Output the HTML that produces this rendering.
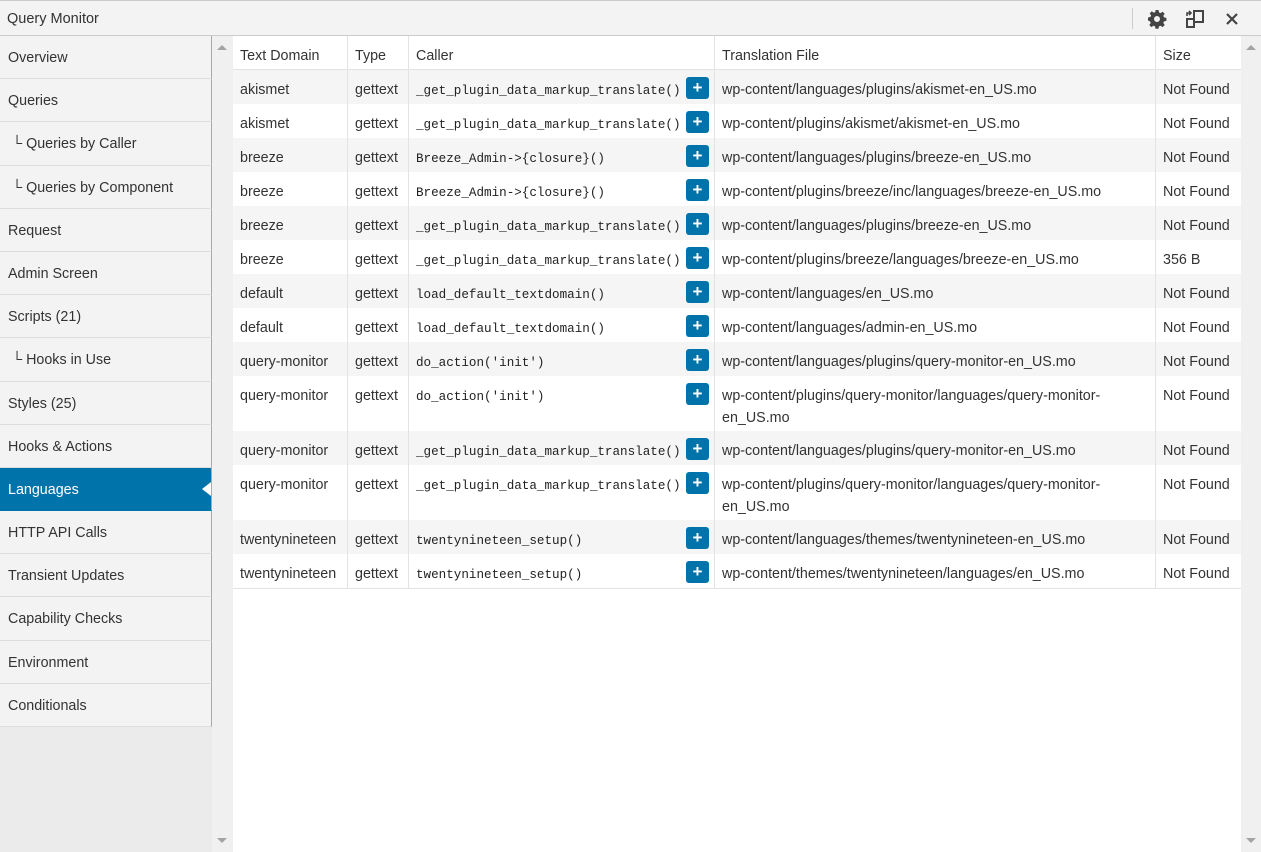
<!DOCTYPE html>
<html><head><meta charset="utf-8"><style>
*{margin:0;padding:0;box-sizing:border-box}
body{width:1261px;height:852px;overflow:hidden;background:#fff;font-family:"Liberation Sans",sans-serif;font-size:14.3px;color:#333;position:relative}
#top{position:absolute;left:0;top:0;width:1261px;height:36px;background:#f3f3f3;border-top:1px solid #ccc;border-bottom:1px solid #ccc}
#top .t{position:absolute;left:7px;top:10px;font-size:14.5px;color:#333}
#top .sep{position:absolute;left:1132px;top:7px;width:1px;height:21px;background:#ccc}
#side{position:absolute;left:0;top:36px;width:212px;height:816px;background:#ebebeb}
#side .i{height:43.2px;line-height:45px;padding-left:8px;background:#f3f3f3;border-bottom:1px solid #ddd;border-right:1px solid #aaa;color:#333;position:relative}
#side .a{background:#0073aa;color:#fff;border-bottom-color:#0073aa}
#side .a:after{content:"";position:absolute;right:0;top:14px;border:7px solid transparent;border-right:7px solid #fff;border-right-width:9px}
#gut{position:absolute;left:212px;top:36px;width:21px;height:816px;background:#f0f0f0}
#sb{position:absolute;left:1241px;top:36px;width:20px;height:816px;background:#f0f0f0}
.up{position:absolute;left:5px;top:9px;border:5px solid transparent;border-bottom:5px solid #a3a3a3;border-top:0}
.dn{position:absolute;left:5px;bottom:9px;border:5px solid transparent;border-top:5px solid #a3a3a3;border-bottom:0}
#tb{position:absolute;left:233px;top:36px;width:1008px}
.r{position:relative;height:34px;border-bottom:0}
.r.h{height:34px;border-bottom:1px solid #e3e3e3;background:#fff}
.r.o{background:#f5f5f5}
.r.tall{height:55px}
.c{position:absolute;top:0;bottom:0;padding:9px 6px 0 7px;border-right:1px solid #e3e3e3;line-height:22px}
.c1{left:0;width:115px}.c2{left:115px;width:61px}.c3{left:176px;width:306px}.c4{left:482px;width:441px}.c5{left:923px;width:85px;border-right:0}
.m{font-family:"Liberation Mono",monospace;font-size:12.6px;color:#222;padding-top:10px}
.b{position:absolute;left:453px;top:7px;width:23px;height:22px;background:#0073aa;border-radius:3px;color:#fff;text-align:center;line-height:22px;font-size:17px;font-weight:bold}
.end{border-top:1px solid #e3e3e3}
</style></head><body>
<div id="top"><div class="t">Query Monitor</div><div class="sep"></div>
<svg style="position:absolute;left:1147px;top:8px" width="20" height="20" viewBox="0 0 20 20"><path fill="#444" d="M8.5 1h3l.5 2.4 1.6.7 2-1.4 2.1 2.1-1.4 2 .7 1.6 2.4.5v3l-2.4.5-.7 1.6 1.4 2-2.1 2.1-2-1.4-1.6.7-.5 2.4h-3l-.5-2.4-1.6-.7-2 1.4-2.1-2.1 1.4-2-.7-1.6L1 11.5v-3l2.4-.5.7-1.6-1.4-2 2.1-2.1 2 1.4 1.6-.7zM10 7a3 3 0 100 6 3 3 0 000-6z"/></svg>
<svg style="position:absolute;left:1185px;top:8px" width="20" height="20" viewBox="0 0 20 20" fill="none" stroke="#444" stroke-width="2"><rect x="9" y="2" width="9" height="11"/><path d="M2 18V10h7v8z"/><path d="M2 7V4h4M4 2l2 2-2 2" stroke-width="1.6"/></svg>
<svg style="position:absolute;left:1225px;top:11px" width="14" height="14" viewBox="0 0 14 14" stroke="#444" stroke-width="2.2"><path d="M2 2l10 10M12 2L2 12"/></svg>
</div>
<div id="side">
<div class="i">Overview</div><div class="i">Queries</div><div class="i">&nbsp;└ Queries by Caller</div><div class="i">&nbsp;└ Queries by Component</div><div class="i">Request</div><div class="i">Admin Screen</div><div class="i">Scripts (21)</div><div class="i">&nbsp;└ Hooks in Use</div><div class="i">Styles (25)</div><div class="i">Hooks &amp; Actions</div><div class="i a">Languages</div><div class="i">HTTP API Calls</div><div class="i">Transient Updates</div><div class="i">Capability Checks</div><div class="i">Environment</div><div class="i">Conditionals</div>
</div>
<div id="gut"><div class="up"></div><div class="dn"></div></div>
<div id="sb"><div class="up"></div><div class="dn"></div></div>
<div id="tb">
<div class="r h"><div class="c c1">Text Domain</div><div class="c c2">Type</div><div class="c c3">Caller</div><div class="c c4">Translation File</div><div class="c c5">Size</div></div>
<div class="r o"><div class="c c1">akismet</div><div class="c c2">gettext</div><div class="c c3 m">_get_plugin_data_markup_translate()</div><div class="b">+</div><div class="c c4">wp-content/languages/plugins/akismet-en_US.mo</div><div class="c c5">Not Found</div></div>
<div class="r"><div class="c c1">akismet</div><div class="c c2">gettext</div><div class="c c3 m">_get_plugin_data_markup_translate()</div><div class="b">+</div><div class="c c4">wp-content/plugins/akismet/akismet-en_US.mo</div><div class="c c5">Not Found</div></div>
<div class="r o"><div class="c c1">breeze</div><div class="c c2">gettext</div><div class="c c3 m">Breeze_Admin-&gt;{closure}()</div><div class="b">+</div><div class="c c4">wp-content/languages/plugins/breeze-en_US.mo</div><div class="c c5">Not Found</div></div>
<div class="r"><div class="c c1">breeze</div><div class="c c2">gettext</div><div class="c c3 m">Breeze_Admin-&gt;{closure}()</div><div class="b">+</div><div class="c c4">wp-content/plugins/breeze/inc/languages/breeze-en_US.mo</div><div class="c c5">Not Found</div></div>
<div class="r o"><div class="c c1">breeze</div><div class="c c2">gettext</div><div class="c c3 m">_get_plugin_data_markup_translate()</div><div class="b">+</div><div class="c c4">wp-content/languages/plugins/breeze-en_US.mo</div><div class="c c5">Not Found</div></div>
<div class="r"><div class="c c1">breeze</div><div class="c c2">gettext</div><div class="c c3 m">_get_plugin_data_markup_translate()</div><div class="b">+</div><div class="c c4">wp-content/plugins/breeze/languages/breeze-en_US.mo</div><div class="c c5">356 B</div></div>
<div class="r o"><div class="c c1">default</div><div class="c c2">gettext</div><div class="c c3 m">load_default_textdomain()</div><div class="b">+</div><div class="c c4">wp-content/languages/en_US.mo</div><div class="c c5">Not Found</div></div>
<div class="r"><div class="c c1">default</div><div class="c c2">gettext</div><div class="c c3 m">load_default_textdomain()</div><div class="b">+</div><div class="c c4">wp-content/languages/admin-en_US.mo</div><div class="c c5">Not Found</div></div>
<div class="r o"><div class="c c1">query-monitor</div><div class="c c2">gettext</div><div class="c c3 m">do_action('init')</div><div class="b">+</div><div class="c c4">wp-content/languages/plugins/query-monitor-en_US.mo</div><div class="c c5">Not Found</div></div>
<div class="r tall"><div class="c c1">query-monitor</div><div class="c c2">gettext</div><div class="c c3 m">do_action('init')</div><div class="b">+</div><div class="c c4">wp-content/plugins/query-monitor/languages/query-monitor-<br>en_US.mo</div><div class="c c5">Not Found</div></div>
<div class="r o"><div class="c c1">query-monitor</div><div class="c c2">gettext</div><div class="c c3 m">_get_plugin_data_markup_translate()</div><div class="b">+</div><div class="c c4">wp-content/languages/plugins/query-monitor-en_US.mo</div><div class="c c5">Not Found</div></div>
<div class="r tall"><div class="c c1">query-monitor</div><div class="c c2">gettext</div><div class="c c3 m">_get_plugin_data_markup_translate()</div><div class="b">+</div><div class="c c4">wp-content/plugins/query-monitor/languages/query-monitor-<br>en_US.mo</div><div class="c c5">Not Found</div></div>
<div class="r o"><div class="c c1">twentynineteen</div><div class="c c2">gettext</div><div class="c c3 m">twentynineteen_setup()</div><div class="b">+</div><div class="c c4">wp-content/languages/themes/twentynineteen-en_US.mo</div><div class="c c5">Not Found</div></div>
<div class="r"><div class="c c1">twentynineteen</div><div class="c c2">gettext</div><div class="c c3 m">twentynineteen_setup()</div><div class="b">+</div><div class="c c4">wp-content/themes/twentynineteen/languages/en_US.mo</div><div class="c c5">Not Found</div></div>
<div class="end"></div>
</div>
</body></html>
